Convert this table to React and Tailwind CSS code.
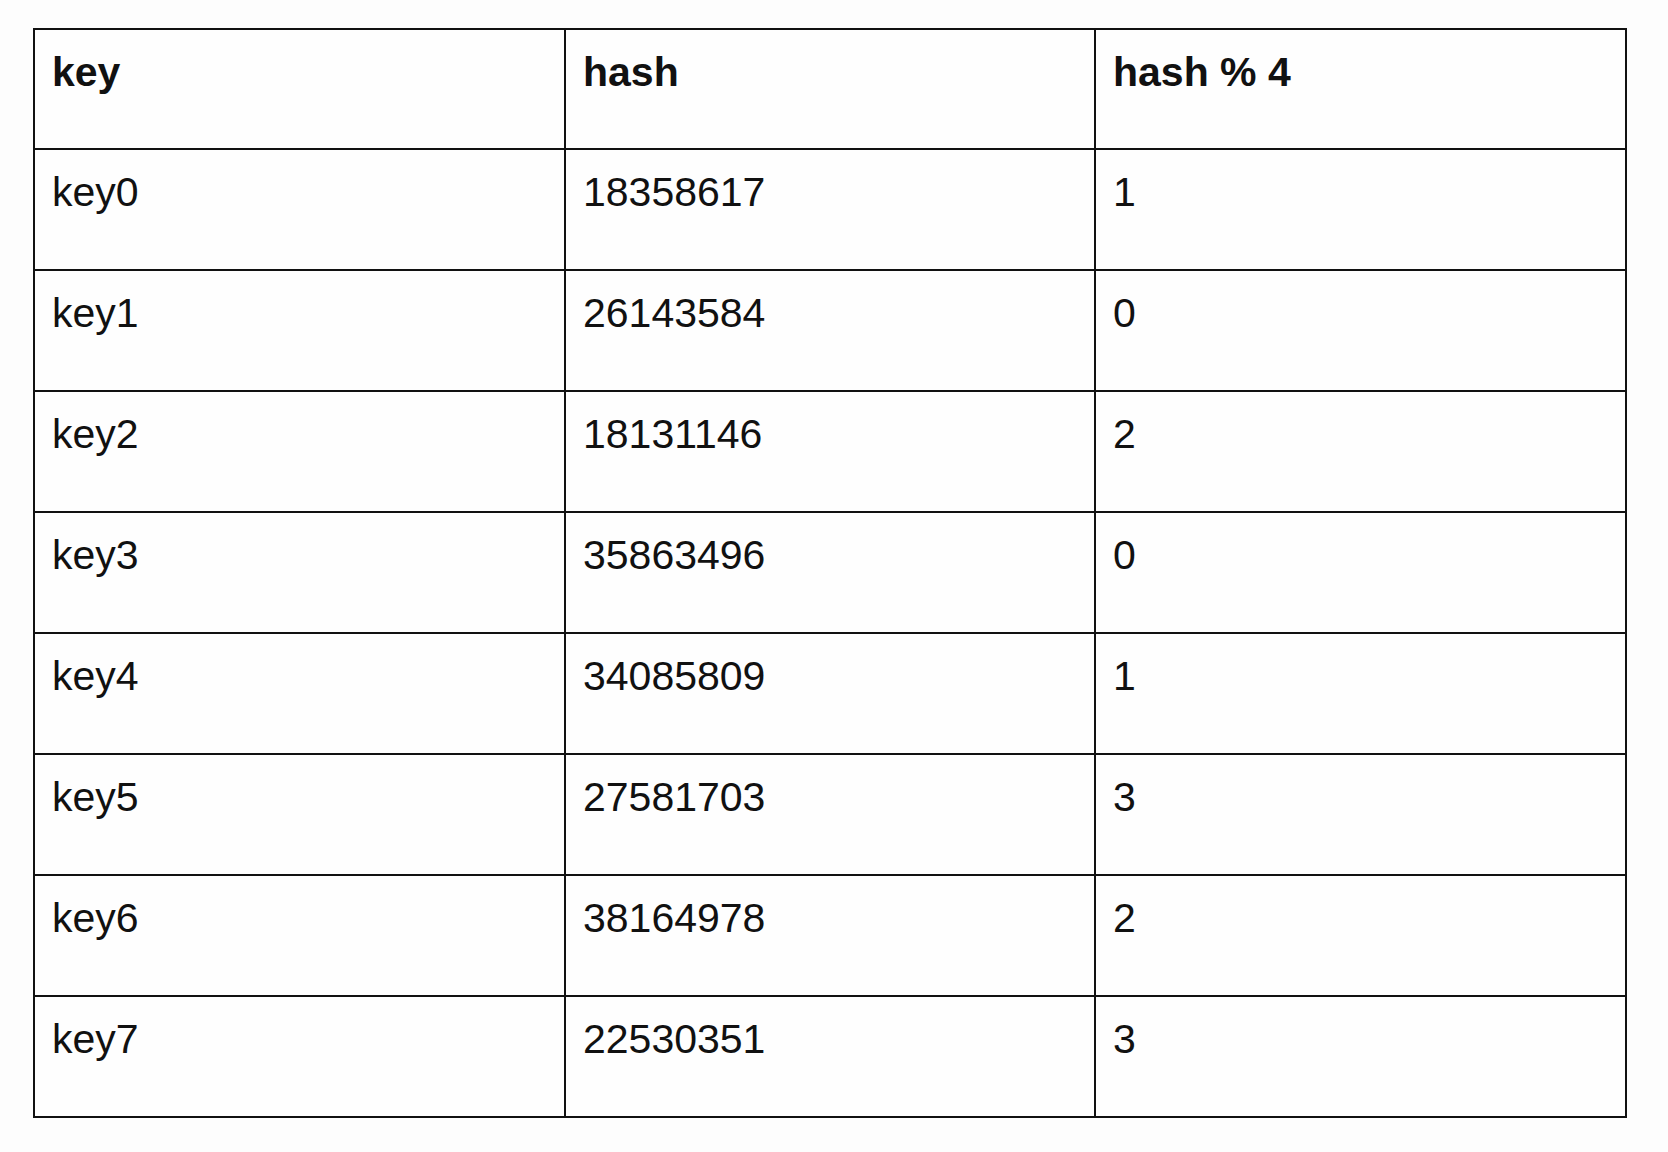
import React from 'react';

const rows = [
    ['key0', '18358617', '1'],
    ['key1', '26143584', '0'],
    ['key2', '18131146', '2'],
    ['key3', '35863496', '0'],
    ['key4', '34085809', '1'],
    ['key5', '27581703', '3'],
    ['key6', '38164978', '2'],
    ['key7', '22530351', '3'],
];

const headers = ['key', 'hash', 'hash % 4'];

const App = () => {
    return (
        <div className="min-h-screen w-full bg-[#fdfdfd] pt-[28px] pl-[33px] font-['Liberation_Sans',Arial,sans-serif] text-[#111]">
            <div className="grid w-[1594px] grid-cols-[531px_530px_531px] border-l-2 border-t-2 border-[#111] bg-[#fefefe]">
                {headers.map((h) => (
                    <div
                        key={h}
                        className="h-[120px] border-b-2 border-r-2 border-[#111] pl-[17px] pr-4 pt-[19px] text-[41px] leading-[47px] font-bold"
                    >
                        {h}
                    </div>
                ))}
                {rows.map((row) =>
                    row.map((cell, i) => (
                        <div
                            key={row[0] + i}
                            className="h-[121px] border-b-2 border-r-2 border-[#111] pl-[17px] pr-4 pt-[19px] text-[41px] leading-[47px]"
                        >
                            {cell}
                        </div>
                    ))
                )}
            </div>
        </div>
    );
};

export default App;
